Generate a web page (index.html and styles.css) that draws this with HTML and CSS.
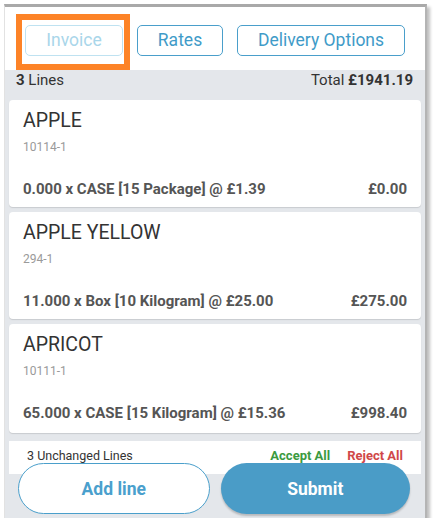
FILE: index.html
```html
<!DOCTYPE html>
<html>
<head>
<meta charset="utf-8">
<link rel="stylesheet" href="styles.css">
</head>
<body>
<div class="frame">
  <div class="tabs">
    <button class="tab tab-disabled">Invoice</button>
    <button class="tab tab-rates">Rates</button>
    <button class="tab tab-delivery">Delivery Options</button>
    <div class="highlight"></div>
  </div>
  <div class="content">
    <div class="summary">
      <span><b>3</b> Lines</span>
      <span>Total <b>£1941.19</b></span>
    </div>
    <div class="cards">
      <div class="card">
        <div class="title">APPLE</div>
        <div class="code">10114-1</div>
        <div class="detail"><span>0.000 x CASE [15 Package] @ £1.39</span><span>£0.00</span></div>
      </div>
      <div class="card">
        <div class="title">APPLE YELLOW</div>
        <div class="code">294-1</div>
        <div class="detail"><span>11.000 x Box [10 Kilogram] @ £25.00</span><span>£275.00</span></div>
      </div>
      <div class="card card-last">
        <div class="title">APRICOT</div>
        <div class="code">10111-1</div>
        <div class="detail"><span>65.000 x CASE [15 Kilogram] @ £15.36</span><span>£998.40</span></div>
      </div>
    </div>
    <div class="unchanged">
      <span class="unchanged-label">3 Unchanged Lines</span>
      <span class="actions"><span class="accept">Accept All</span><span class="reject">Reject All</span></span>
    </div>
    <div class="footer">
      <button class="pill pill-outline">Add line</button>
      <button class="pill pill-solid">Submit</button>
    </div>
  </div>
</div>
</body>
</html>
```
FILE: styles.css
```css
html, body {
  margin: 0;
  padding: 0;
  background: #ffffff;
}
body {
  font-family: Roboto, "Liberation Sans", Arial, sans-serif;
  color: #333333;
}
.frame {
  margin: 4px 0 0 4px;
  width: 420px;
  height: 511px;
  border-top: 3px solid #a9a9a9;
  border-left: 1px solid #e2e2e2;
  border-right: 2px solid #b4b4b4;
  box-shadow: 3px 3px 3px rgba(0, 0, 0, 0.25);
  display: flex;
  flex-direction: column;
  background: #e4e7eb;
  overflow: hidden;
}
.tabs {
  position: relative;
  background: #ffffff;
  height: 63px;
  box-sizing: border-box;
  padding: 18px 20px 0 20px;
  display: flex;
  gap: 14px;
  align-items: flex-start;
}
.tab {
  height: 31px;
  border: 1.5px solid #4a9fcb;
  border-radius: 5px;
  background: #ffffff;
  color: #3f9bc8;
  font-family: Roboto, "Liberation Sans", Arial, sans-serif;
  font-size: 17.5px;
  line-height: 20px;
  padding: 0 0 2px 0;
}
.tab-disabled {
  width: 98px;
  border-color: #bfe2f1;
  color: #a9d6ea;
}
.tab-rates {
  width: 86px;
}
.tab-delivery {
  width: 168px;
}
.highlight {
  position: absolute;
  left: 11px;
  top: 7px;
  width: 114px;
  height: 56px;
  box-sizing: border-box;
  border: 6px solid #fd8327;
}
.content {
  flex: 1;
  display: flex;
  flex-direction: column;
}
.summary {
  display: flex;
  justify-content: space-between;
  font-size: 15px;
  line-height: 18px;
  padding: 1px 12px 0 11px;
  height: 30px;
  box-sizing: border-box;
  color: #333;
}
.cards {
  display: flex;
  flex-direction: column;
  gap: 5px;
  padding: 0 4px;
}
.card {
  background: #ffffff;
  border-radius: 4px;
  height: 107px;
  box-sizing: border-box;
  padding: 9px 14px 0 14px;
  box-shadow: 0 1px 1px rgba(0, 0, 0, 0.12);
  display: flex;
  flex-direction: column;
}
.card-last {
  height: 109px;
}
.title {
  font-size: 19.5px;
  line-height: 24px;
  color: #333333;
}
.code {
  font-size: 12px;
  line-height: 14px;
  margin-top: 7px;
  color: #9a9a9a;
}
.detail {
  margin-top: 26px;
  display: flex;
  justify-content: space-between;
  font-size: 15px;
  line-height: 18px;
  font-weight: bold;
  color: #555555;
}
.unchanged {
  margin: 8px 4px 0 4px;
  height: 33px;
  background: #ffffff;
  box-sizing: border-box;
  padding: 8px 18px 0 18px;
  display: flex;
  justify-content: space-between;
  font-size: 12.5px;
  line-height: 14px;
}
.unchanged-label {
  color: #333333;
}
.actions {
  display: flex;
  gap: 17px;
  font-weight: bold;
  font-size: 13px;
}
.accept {
  color: #3b9a3f;
}
.reject {
  color: #d04848;
}
.footer {
  margin-top: -11px;
  padding: 0 15px 0 13px;
  display: flex;
  gap: 11px;
}
.pill {
  flex: 1;
  height: 51px;
  border-radius: 26px;
  font-family: Roboto, "Liberation Sans", Arial, sans-serif;
  font-weight: bold;
  font-size: 17.5px;
  padding: 0;
}
.pill-outline {
  background: #ffffff;
  border: 1.5px solid #4a9fcb;
  color: #4aa0cd;
}
.pill-solid {
  background: #4a9cc7;
  border: none;
  color: #ffffff;
  box-shadow: 0 2px 2px rgba(0, 0, 0, 0.2);
}
```
